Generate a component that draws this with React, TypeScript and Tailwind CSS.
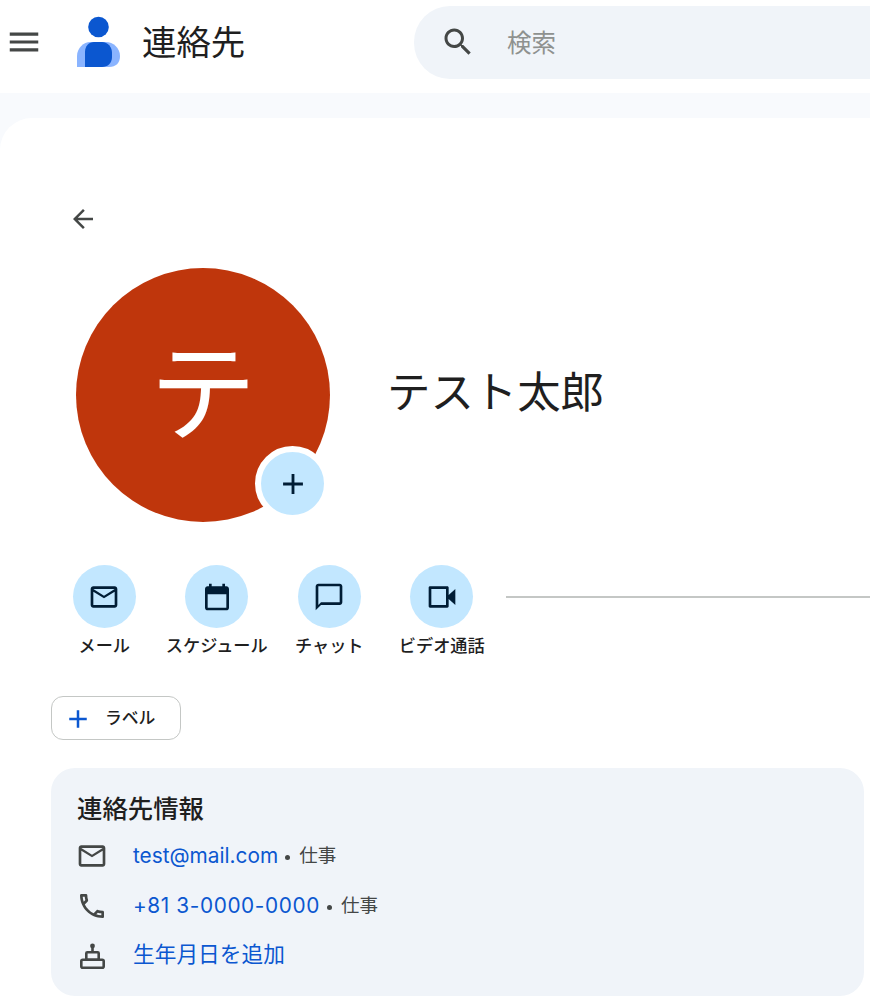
const font = { fontFamily: '"Roboto","Noto Sans CJK JP",sans-serif' };
const linkFont = { fontFamily: '"Inter","Noto Sans CJK JP",sans-serif' };

function Ic({ d, size, color, className = "" }: { d: string; size: number; color: string; className?: string }) {
  return (
    <svg width={size} height={size} viewBox="0 0 24 24" fill={color} className={"shrink-0 " + className}>
      <path d={d} />
    </svg>
  );
}

const P = {
  menu: "M3 18h18v-2H3v2zm0-5h18v-2H3v2zm0-7v2h18V6H3z",
  search:
    "M15.5 14h-.79l-.28-.27C15.41 12.59 16 11.11 16 9.5 16 5.91 13.09 3 9.5 3S3 5.91 3 9.5 5.91 16 9.5 16c1.61 0 3.09-.59 4.23-1.57l.27.28v.79l5 4.99L20.49 19l-4.99-5zm-6 0C7.01 14 5 11.99 5 9.5S7.01 5 9.5 5 14 7.01 14 9.5 11.99 14 9.5 14z",
  back: "M20 11H7.83l5.59-5.59L12 4l-8 8 8 8 1.41-1.41L7.83 13H20v-2z",
  plus: "M19 13h-6v6h-2v-6H5v-2h6V5h2v6h6v2z",
  mail: "M20 4H4c-1.1 0-2 .9-2 2v12c0 1.1.9 2 2 2h16c1.1 0 2-.9 2-2V6c0-1.1-.9-2-2-2zm0 14H4V8l8 5 8-5v10zm-8-7L4 6h16l-8 5z",
  cal: "M19 4h-1V2h-2v2H8V2H6v2H5c-1.1 0-2 .9-2 2v14c0 1.1.9 2 2 2h14c1.1 0 2-.9 2-2V6c0-1.1-.9-2-2-2zm0 16H5V10h14v10z",
  chat: "M20 2H4c-1.1 0-2 .9-2 2v18l4-4h14c1.1 0 2-.9 2-2V4c0-1.1-.9-2-2-2zm0 14H6l-2 2V4h16v12z",
  video:
    "M17 10.5V5c0-.55-.45-1-1-1H3c-.55 0-1 .45-1 1v14c0 .55.45 1 1 1h13c.55 0 1-.45 1-1v-5.5l5 4.5V6l-5 4.5zM15 18H4V6h11v12z",
  phone:
    "M6.54 5c.06.89.21 1.76.45 2.59l-1.2 1.2c-.41-1.2-.67-2.47-.76-3.79h1.51m9.86 12.02c.85.24 1.72.39 2.6.45v1.49c-1.32-.09-2.59-.35-3.8-.75l1.2-1.19M7.5 3H4c-.55 0-1 .45-1 1 0 9.39 7.61 17 17 17 .55 0 1-.45 1-1v-3.49c0-.55-.45-1-1-1-1.24 0-2.45-.2-3.57-.57-.1-.04-.21-.05-.31-.05-.26 0-.51.1-.71.29l-2.2 2.2c-2.83-1.45-5.15-3.76-6.59-6.59l2.2-2.2c.28-.28.36-.67.25-1.02C8.7 6.45 8.5 5.25 8.5 4c0-.55-.45-1-1-1z",
};

function Action({ d, label }: { d: string; label: string }) {
  return (
    <div className="w-[112.5px] shrink-0 flex flex-col items-center">
      <div className="w-[63px] h-[63px] rounded-full bg-[#c2e7ff] flex items-center justify-center">
        <Ic d={d} size={32} color="#001d35" />
      </div>
      <div className="mt-[5px] text-[17.2px] leading-[26px] font-medium text-[#1f1f1f] whitespace-nowrap">{label}</div>
    </div>
  );
}

function Row({ icon, children, mt }: { icon: React.ReactNode; children: React.ReactNode; mt: string }) {
  return (
    <div className={"flex items-center h-[30px] " + mt}>
      <div className="w-[30px] h-[30px] flex items-center justify-center mr-[26px] shrink-0">{icon}</div>
      {children}
    </div>
  );
}

function Work() {
  return (
    <span className="flex items-center text-[18.5px] text-[#444746] whitespace-nowrap">
      <span className="ml-[7px] w-[5px] h-[5px] rounded-full bg-[#444746] mt-[2px]" />
      <span className="ml-[9px] mt-[2px]">仕事</span>
    </span>
  );
}

export default function App() {
  return (
    <div style={font} className="w-[870px] h-[1002px] overflow-hidden bg-[#f8fafd] flex flex-col">
      <header className="h-[93px] bg-white flex items-start shrink-0">
        <Ic d={P.menu} size={38} color="#444746" className="ml-[5px] mt-[23px]" />
        <svg width="46" height="52" viewBox="0 0 46 52" className="ml-[32px] mt-[16px] shrink-0">
          <path d="M2 51 V40 C2 32 9 26 15 26 H31 C38 26 45 32 45 40 C45 47 41 51 34 51 Z" fill="#8ab4ff" />
          <path d="M10 51 V36 C10 30 14 26 19 26 H27 C33 26 37 31 37 37 V41 C37 47 33 51 27 51 Z" fill="#0b57d0" />
          <circle cx="23.5" cy="11" r="10.3" fill="#0b57d0" />
        </svg>
        <div className="ml-[21px] mt-[17px] w-[104px] shrink-0 text-[34.4px] leading-[52px] text-[#1f1f1f] whitespace-nowrap">連絡先</div>
        <div className="ml-[168px] mt-[6px] w-[470px] shrink-0 h-[73px] rounded-l-[36px] bg-[#f0f4f9] flex items-center">
          <Ic d={P.search} size={36} color="#444746" className="ml-[26px] -mt-[1px]" />
          <div className="ml-[31px] mt-[4px] text-[24.5px] text-[#8e918f]">検索</div>
        </div>
      </header>
      <main className="mt-[25px] flex-1 bg-white rounded-tl-[32px] pl-[51px] pr-[6px] pt-[86px]">
        <div className="ml-[17px] h-[30px]">
          <Ic d={P.back} size={30} color="#444746" />
        </div>
        <div className="ml-[25px] mt-[34px] flex items-center">
          <div className="relative w-[254px] h-[254px] rounded-full bg-[#bf360c] flex items-center justify-center shrink-0">
            <span className="text-[107px] leading-none text-white">テ</span>
            <div className="absolute left-[179px] top-[178px] w-[75px] h-[75px] rounded-full border-[6px] border-white bg-[#c2e7ff] flex items-center justify-center">
              <Ic d={P.plus} size={34} color="#001d35" />
            </div>
          </div>
          <div className="ml-[57px] -mt-[3px] text-[43.4px] leading-[60px] text-[#1f1f1f] whitespace-nowrap">テスト太郎</div>
        </div>
        <div className="mt-[43px] ml-[-3px] flex items-start">
          <div className="flex">
            <Action d={P.mail} label="メール" />
            <Action d={P.cal} label="スケジュール" />
            <Action d={P.chat} label="チャット" />
            <Action d={P.video} label="ビデオ通話" />
          </div>
          <div className="flex-1 mt-[31px] ml-[8px] mr-[-6px] h-[2px] bg-[#c4c7c5]" />
        </div>
        <div className="mt-[37px] w-[130px] h-[44px] border border-[#c4c7c5] rounded-[12px] flex items-center">
          <Ic d={P.plus} size={30} color="#0b57d0" className="ml-[11px] mt-[1px]" />
          <span className="ml-[12px] text-[16.8px] leading-[24px] -mt-[1px] font-medium text-[#1f1f1f] whitespace-nowrap">ラベル</span>
        </div>
        <section className="mt-[28px] h-[228px] bg-[#f0f4f9] rounded-[24px] pl-[26px] pt-[23px]">
          <h2 className="text-[25.4px] leading-[36px] font-medium text-[#1f1f1f]">連絡先情報</h2>
          <Row mt="mt-[14px]" icon={<Ic d={P.mail} size={32} color="#444746" />}>
            <span style={linkFont} className="text-[20.8px] text-[#0b57d0]">test@mail.com</span>
            <Work />
          </Row>
          <Row mt="mt-[20px]" icon={<Ic d={P.phone} size={32} color="#444746" />}>
            <span style={linkFont} className="text-[20.8px] tracking-[0.6px] text-[#0b57d0]">+81 3-0000-0000</span>
            <Work />
          </Row>
          <Row
            mt="mt-[20px]"
            icon={
              <svg width="30" height="30" viewBox="0 0 30 30" fill="none" stroke="#444746" strokeWidth="2.6">
                <circle cx="15.5" cy="5" r="2.4" fill="#444746" stroke="none" />
                <path d="M15.5 6v5" />
                <rect x="9.3" y="11.3" width="12.4" height="7.5" rx="1" />
                <rect x="4.3" y="18.8" width="22.4" height="8" rx="1.5" />
              </svg>
            }
          >
            <span className="text-[21.7px] -mt-[1px] text-[#0b57d0]">生年月日を追加</span>
          </Row>
        </section>
      </main>
    </div>
  );
}
